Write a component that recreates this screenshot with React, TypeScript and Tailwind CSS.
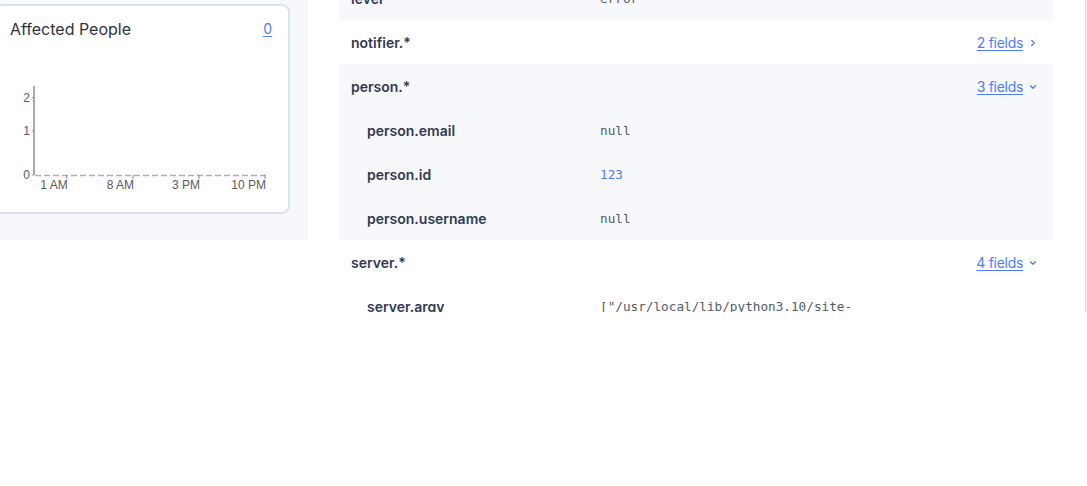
import { ChevronDown, ChevronRight } from "lucide-react";

type Row = {
  name: string;
  value?: string;
  valueClass?: string;
  fields?: number;
  open?: boolean;
  child?: boolean;
  striped?: boolean;
};

const rows: Row[] = [
  { name: "level", value: "error", valueClass: "text-[#555b66]", striped: true },
  { name: "notifier.*", fields: 2, open: false },
  { name: "person.*", fields: 3, open: true, striped: true },
  { name: "person.email", value: "null", valueClass: "text-[#555b66]", child: true, striped: true },
  { name: "person.id", value: "123", valueClass: "text-[#4a7cf6]", child: true, striped: true },
  { name: "person.username", value: "null", valueClass: "text-[#555b66]", child: true, striped: true },
  { name: "server.*", fields: 4, open: true },
  {
    name: "server.argv",
    value: '["/usr/local/lib/python3.10/site-',
    valueClass: "text-[#555b66]",
    child: true,
  },
  { name: "server.host", value: '"ip-10-0-0-12"', valueClass: "text-[#555b66]", child: true },
];

const AffectedChart = () => {
  // svg origin sits 4px left of the page edge and 80px down
  const xTicks = [
    { x: 70.7, label: "1 AM" },
    { x: 137, label: "8 AM" },
    { x: 203, label: "3 PM" },
    { x: 269, label: "10 PM" },
  ];
  const yTicks = [
    { y: 17.5, label: "2" },
    { y: 51, label: "1" },
    { y: 95, label: "0" },
  ];

  return (
    <svg width="292" height="120" className="block mt-[39px]">
      <line x1="38" y1="6" x2="38" y2="95" stroke="#a9a9a9" strokeWidth="2" />
      {yTicks.map((t) => (
        <g key={t.label}>
          <line x1="36" y1={t.y} x2="38" y2={t.y} stroke="#999" strokeWidth="1" />
          <text
            x="34"
            y={t.y + 4}
            textAnchor="end"
            fontSize="12"
            fill="#5b5b5b"
            fontFamily="'Liberation Sans', Arial, sans-serif"
          >
            {t.label}
          </text>
        </g>
      ))}
      <line
        x1="39"
        y1="95.5"
        x2="270"
        y2="95.5"
        stroke="#a3b0d6"
        strokeWidth="1.5"
        strokeDasharray="6 3"
      />
      {xTicks.map((t) => (
        <g key={t.label}>
          <line x1={t.x} y1="95" x2={t.x} y2="99" stroke="#888" strokeWidth="1" />
          <text
            x={t.x + 1}
            y="109"
            textAnchor="end"
            fontSize="12"
            fill="#5b5b5b"
            fontFamily="'Liberation Sans', Arial, sans-serif"
          >
            {t.label}
          </text>
        </g>
      ))}
    </svg>
  );
};

const FieldRow = ({ row }: { row: Row }) => {
  return (
    <div
      className={`flex items-center h-[44px] pt-[2px] pr-[15px] ${row.striped ? "bg-[#f7f8fc]" : "bg-white"} ${
        row.child ? "pl-7" : "pl-3"
      }`}
    >
      <div
        className={`shrink-0 text-sm font-semibold text-[#333a4f] ${row.child ? "w-[233px]" : "w-[249px]"}`}
      >
        {row.name}
      </div>
      {row.value !== undefined && (
        <div
          className={`flex-1 whitespace-nowrap text-[12.7px] ${row.valueClass}`}
          style={{ fontFamily: "'DejaVu Sans Mono', monospace" }}
        >
          {row.value}
        </div>
      )}
      {row.fields !== undefined && (
        <div className="ml-auto flex items-center gap-[5px] text-sm tracking-[-0.3px] text-[#4d7cfe]">
          <span className="underline underline-offset-2">{row.fields} fields</span>
          {row.open ? (
            <ChevronDown size={10} strokeWidth={3} />
          ) : (
            <ChevronRight size={10} strokeWidth={3} />
          )}
        </div>
      )}
    </div>
  );
};

export default function App() {
  return (
    <div
      className="w-[1087px] h-[486px] bg-white overflow-hidden flex items-start"
      style={{ fontFamily: "Inter, 'Noto Sans', sans-serif" }}
    >
      <div className="w-[307px] h-[240px] shrink-0 bg-[#f7f8fc] pt-[4px]">
        <div className="ml-[-6px] w-[296px] h-[210px] bg-white border-2 border-[#dbe2f0] rounded-lg">
          <div className="flex items-center justify-between h-[24px] mt-[11px] pl-[14px] pr-[16px]">
            <span className="text-base text-[#30333a]">Affected People</span>
            <span className="text-sm text-[#4d7cfe] underline underline-offset-2">0</span>
          </div>
          <AffectedChart />
        </div>
      </div>

      <div className="flex-1 h-[312px] overflow-hidden px-8 border-r-2 border-[#e6e6e6]">
        <div className="mt-[-24px]">
          {rows.map((row) => (
            <FieldRow key={row.name} row={row} />
          ))}
        </div>
      </div>
    </div>
  );
}
